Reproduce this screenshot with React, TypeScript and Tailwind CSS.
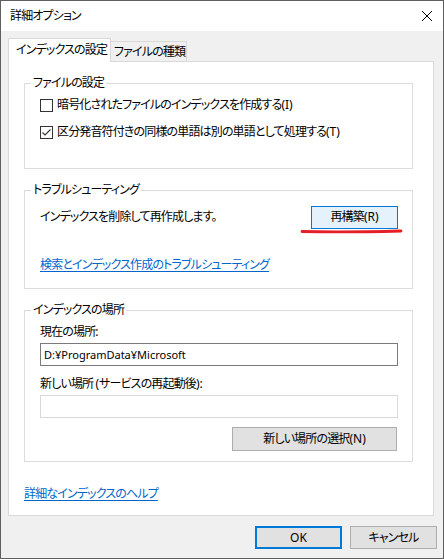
import React from "react";

function CheckBox({ checked }: { checked?: boolean }) {
  return (
    <span className="flex h-[13px] w-[13px] shrink-0 items-center justify-center border border-[#333333] bg-white">
      {checked && (
        <svg width="11" height="11" viewBox="0 0 11 11">
          <path d="M1.5 5.5 L4 8 L9.5 2.5" fill="none" stroke="#333333" strokeWidth="1.1" />
        </svg>
      )}
    </span>
  );
}

function Group({
  title,
  className,
  children,
}: {
  title: string;
  className: string;
  children: React.ReactNode;
}) {
  return (
    <fieldset className={`ml-[15px] mr-[20px] border border-[#dcdcdc] ${className}`}>
      <legend className="ml-[6px] px-[2px] leading-[16px]">{title}</legend>
      {children}
    </fieldset>
  );
}

function Key({ k }: { k: string }) {
  return <span className="tracking-normal">({k})</span>;
}

export default function App() {
  return (
    <div className="flex h-[559px] w-[444px] flex-col border border-[#5f5f5f] bg-[#f0f0f0] text-[12px] leading-[16px] tracking-[-0.85px] text-black font-['Noto_Sans','Noto_Sans_CJK_JP',sans-serif] [font-feature-settings:'palt']">
      {/* title bar */}
      <div className="flex h-[30px] shrink-0 items-center justify-between bg-white pl-[9px] pr-[9px]">
        <span>詳細オプション</span>
        <svg width="12" height="12" viewBox="0 0 12 12" className="mr-[1px]">
          <path d="M1 1 L11 11 M11 1 L1 11" stroke="#000" strokeWidth="1" />
        </svg>
      </div>

      <div className="flex flex-1 flex-col pl-[7px]">
        {/* tabs */}
        <div className="mt-[7px] flex h-[23px] items-end">
          <div className="relative z-10 -mb-px flex h-[24px] w-[103px] items-start whitespace-nowrap border border-b-0 border-[#d9d9d9] bg-white pl-[7px] pt-[3px]">
            インデックスの設定
          </div>
          <div className="flex h-[20px] w-[76px] items-start whitespace-nowrap border border-b-0 border-l-0 border-[#d9d9d9] bg-[#f0f0f0] pl-[3px] pt-[2px]">
            ファイルの種類
          </div>
        </div>

        {/* panel */}
        <div className="flex h-[455px] w-[426px] flex-col border border-[#d9d9d9] bg-white">
          <Group title="ファイルの設定" className="mt-[13px] h-[94px]">
            <div className="flex flex-col gap-[7px] pl-[15px] pt-[4px]">
              <label className="flex h-[20px] items-center gap-[4px]">
                <CheckBox />
                <span>
                  暗号化されたファイルのインデックスを作成する<Key k="I" />
                </span>
              </label>
              <label className="flex h-[20px] items-center gap-[4px]">
                <CheckBox checked />
                <span>
                  区分発音符付きの同様の単語は別の単語として処理する<Key k="T" />
                </span>
              </label>
            </div>
          </Group>

          <Group title="トラブルシューティング" className="mt-[13px] h-[107px]">
            <div className="flex flex-col pl-[15px] pr-[14px] pt-[7px]">
              <div className="flex h-[24px] items-center justify-between">
                <span>インデックスを削除して再作成します。</span>
                <div className="relative">
                  <button className="flex h-[23px] w-[87px] items-center justify-center border border-[#0078d7] bg-[#e5f1fb]">
                    再構築<Key k="R" />
                  </button>
                  <svg
                    width="104"
                    height="8"
                    viewBox="0 0 104 8"
                    className="absolute left-[-11px] top-[21px]"
                  >
                    <path
                      d="M2 4.5 C 30 5.2, 70 4.8, 101 4"
                      fill="none"
                      stroke="#e3202a"
                      strokeWidth="2.8"
                      strokeLinecap="round"
                    />
                  </svg>
                </div>
              </div>
              <a className="mt-[28px] w-fit text-[#0066cc] underline underline-offset-[2px]">
                検索とインデックス作成のトラブルシューティング
              </a>
            </div>
          </Group>

          <Group title="インデックスの場所" className="mt-[13px] h-[160px]">
            <div className="flex flex-col pl-[15px] pr-[14px] pt-[6px]">
              <span>現在の場所:</span>
              <div className="mt-[3px] flex h-[23px] items-center border border-[#7a7a7a] bg-white pl-[3px] text-[11px] tracking-normal">
                D:¥ProgramData¥Microsoft
              </div>
              <span className="mt-[10px]">
                新しい場所 <span className="tracking-normal">(</span>サービスの再起動後<span className="tracking-normal">):</span>
              </span>
              <div className="mt-[3px] h-[23px] border border-[#d9d9d9] bg-white" />
              <div className="mt-[9px] flex justify-end">
                <button className="mr-[1px] flex h-[24px] w-[165px] items-center justify-center border border-[#adadad] bg-[#e1e1e1]">
                  新しい場所の選択<Key k="N" />
                </button>
              </div>
            </div>
          </Group>

          <a className="ml-[15px] mt-[24px] w-fit text-[#0066cc] underline underline-offset-[2px]">
            詳細なインデックスのヘルプ
          </a>
        </div>

        {/* bottom buttons */}
        <div className="mt-[10px] flex justify-end gap-[8px] pr-[6px]">
          <button className="flex h-[23px] w-[87px] items-center justify-center border-2 border-[#0078d7] bg-[#e1e1e1] tracking-normal">
            OK
          </button>
          <button className="flex h-[23px] w-[87px] items-center justify-center border border-[#adadad] bg-[#e1e1e1]">
            キャンセル
          </button>
        </div>
      </div>
    </div>
  );
}
